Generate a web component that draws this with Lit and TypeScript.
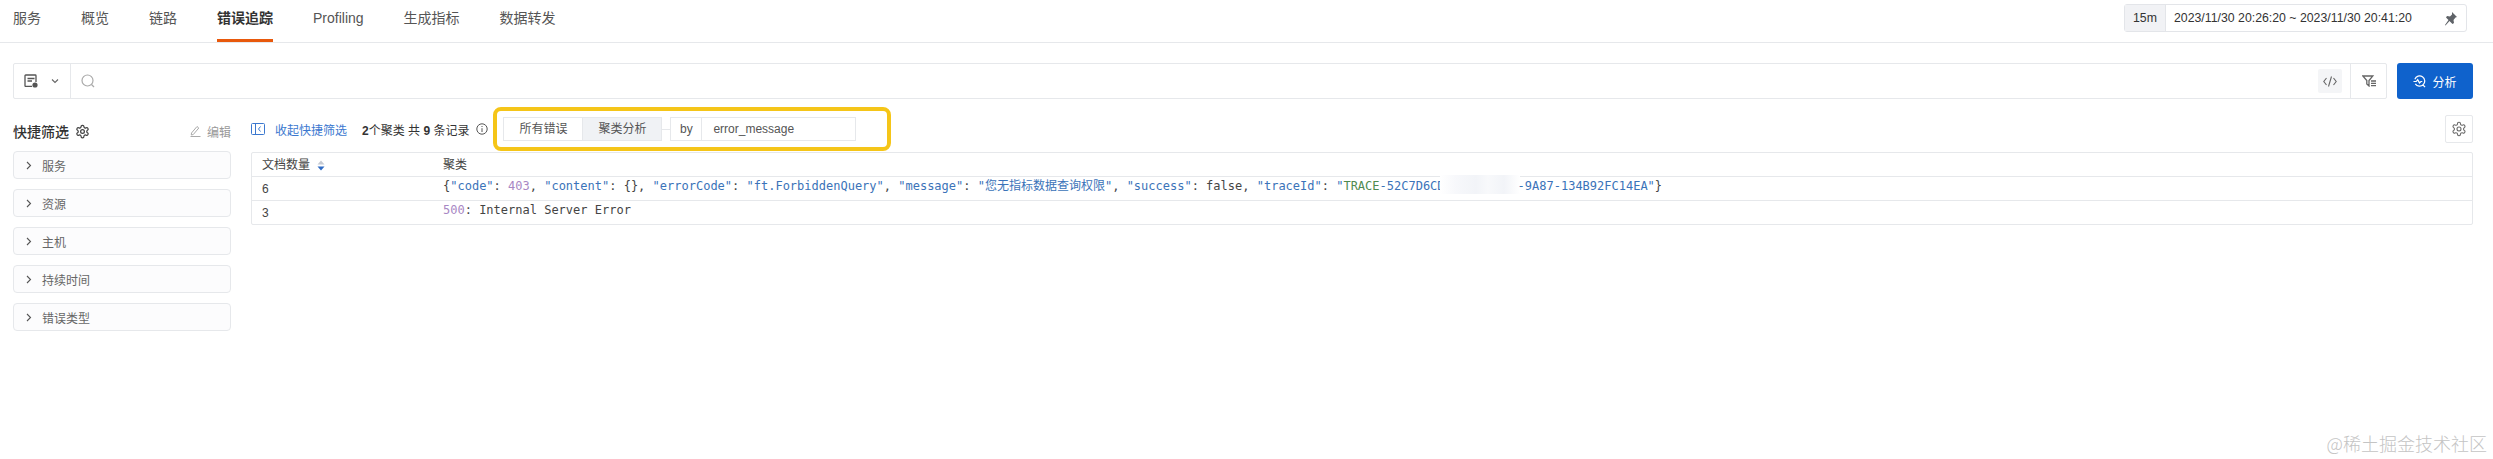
import { LitElement, html, css, svg } from 'lit';
import { customElement } from 'lit/decorators.js';

const GEAR = svg`<path d="M12.22 2h-.44a2 2 0 0 0-2 2v.18a2 2 0 0 1-1 1.73l-.43.25a2 2 0 0 1-2 0l-.15-.08a2 2 0 0 0-2.73.73l-.22.38a2 2 0 0 0 .73 2.73l.15.1a2 2 0 0 1 1 1.72v.51a2 2 0 0 1-1 1.74l-.15.09a2 2 0 0 0-.73 2.73l.22.38a2 2 0 0 0 2.73.73l.15-.08a2 2 0 0 1 2 0l.43.25a2 2 0 0 1 1 1.73V20a2 2 0 0 0 2 2h.44a2 2 0 0 0 2-2v-.18a2 2 0 0 1 1-1.73l.43-.25a2 2 0 0 1 2 0l.15.08a2 2 0 0 0 2.73-.73l.22-.39a2 2 0 0 0-.73-2.73l-.15-.08a2 2 0 0 1-1-1.74v-.5a2 2 0 0 1 1-1.74l.15-.09a2 2 0 0 0 .73-2.73l-.22-.38a2 2 0 0 0-2.73-.73l-.15.08a2 2 0 0 1-2 0l-.43-.25a2 2 0 0 1-1-1.73V4a2 2 0 0 0-2-2z"/><circle cx="12" cy="12" r="3"/>`;

const TABS = ['服务', '概览', '链路', '错误追踪', 'Profiling', '生成指标', '数据转发'];
const FILTERS = ['服务', '资源', '主机', '持续时间', '错误类型'];

@customElement('app-root')
export class AppRoot extends LitElement {
  static styles = css`
    :host {
      display: block;
      position: relative;
      height: 459px;
      overflow: hidden;
      background: #fff;
      color: #333;
      font-family: "Liberation Sans", "Noto Sans CJK SC", sans-serif;
      font-size: 12px;
    }
    svg { display: block; flex: none; }

    .top {
      display: flex;
      justify-content: space-between;
      align-items: flex-start;
      height: 42px;
      padding: 0 26px 0 13px;
      border-bottom: 1px solid #e6e8eb;
    }
    .tabs { display: flex; gap: 40px; }
    .tab {
      height: 39px;
      line-height: 36px;
      font-size: 14px;
      color: #555;
    }
    .tab.on {
      font-weight: 700;
      color: #333;
      border-bottom: 3px solid #e8590c;
    }
    .time {
      display: flex;
      align-items: center;
      width: 343px;
      height: 28px;
      margin-top: 4px;
      box-sizing: border-box;
      border: 1px solid #e3e5e9;
      border-radius: 3px;
      font-size: 12.3px;
    }
    .range {
      width: 40px;
      height: 100%;
      line-height: 26px;
      text-align: center;
      background: #f1f2f5;
      border-right: 1px solid #e3e5e9;
    }
    .dates { flex: 1; padding-left: 8px; }
    .pin { margin-right: 8px; }

    .search-row {
      display: flex;
      gap: 10px;
      padding: 20px 20px 0 13px;
    }
    .search {
      flex: 1;
      display: flex;
      align-items: center;
      height: 36px;
      box-sizing: border-box;
      border: 1px solid #e6e8eb;
      border-radius: 2px;
    }
    .source {
      display: flex;
      align-items: center;
      gap: 13px;
      width: 57px;
      height: 100%;
      box-sizing: border-box;
      padding-left: 10px;
      border-right: 1px solid #e6e8eb;
    }
    .lens { margin-left: 10px; }
    .grow { flex: 1; }
    .code-btn {
      display: flex;
      align-items: center;
      justify-content: center;
      width: 24px;
      height: 24px;
      margin-right: 8px;
      background: #f4f5f7;
      border-radius: 2px;
    }
    .filter-btn {
      display: flex;
      align-items: center;
      justify-content: center;
      width: 35px;
      height: 100%;
      border-left: 1px solid #e6e8eb;
    }
    .analyze {
      display: flex;
      align-items: center;
      justify-content: center;
      gap: 6px;
      width: 76px;
      height: 36px;
      background: #0f62cc;
      border-radius: 3px;
      color: #fff;
    }

    .main {
      display: grid;
      grid-template-columns: 218px 1fr;
      gap: 20px;
      padding: 8px 20px 0 13px;
    }
    .side-head {
      display: flex;
      align-items: center;
      gap: 6px;
      height: 44px;
      padding-top: 4px;
      box-sizing: border-box;
      font-size: 14px;
      font-weight: 500;
    }
    .edit {
      display: flex;
      align-items: center;
      gap: 6px;
      margin-left: auto;
      font-size: 12px;
      font-weight: 400;
      color: #999;
    }
    .cards { display: flex; flex-direction: column; gap: 10px; }
    .card {
      display: flex;
      align-items: center;
      gap: 10px;
      height: 28px;
      box-sizing: border-box;
      padding-left: 12px;
      border: 1px solid #e6e8eb;
      border-radius: 4px;
      background: #fcfcfd;
      color: #666;
    }

    .bar {
      display: flex;
      align-items: center;
      height: 44px;
      margin-bottom: 1px;
    }
    .collapse {
      display: flex;
      align-items: center;
      gap: 10px;
      color: #3b78cf;
    }
    .count { margin-left: 15px; }
    .info { margin-left: 7px; }
    .highlight {
      display: flex;
      align-items: center;
      width: 398px;
      height: 44px;
      margin-left: 5px;
      box-sizing: border-box;
      padding-left: 6px;
      border: 4px solid #f5c518;
      border-radius: 8px;
    }
    .seg {
      width: 80px;
      height: 24px;
      box-sizing: border-box;
      line-height: 22px;
      text-align: center;
      border: 1px solid #e6e8eb;
      color: #555;
    }
    .seg + .seg { margin-left: -1px; background: #f0f2f5; }
    .dash { width: 8px; height: 1px; background: #e6e8eb; }
    .by {
      width: 32px;
      height: 24px;
      box-sizing: border-box;
      line-height: 22px;
      text-align: center;
      border: 1px solid #e6e8eb;
      color: #555;
    }
    .field {
      width: 155px;
      height: 24px;
      margin-left: -1px;
      box-sizing: border-box;
      padding-left: 11px;
      line-height: 22px;
      border: 1px solid #e6e8eb;
      color: #555;
    }
    .settings {
      display: flex;
      align-items: center;
      justify-content: center;
      width: 28px;
      height: 28px;
      margin-left: auto;
      box-sizing: border-box;
      border: 1px solid #e6e8eb;
      border-radius: 2px;
    }

    .table {
      border: 1px solid #e6e8eb;
      border-radius: 2px;
    }
    .row {
      display: grid;
      grid-template-columns: 181px 1fr;
      height: 24px;
      box-sizing: border-box;
      padding-left: 10px;
      line-height: 24px;
    }
    .row.head { height: 23px; }
    .row + .row { border-top: 1px solid #e6e8eb; }
    .head .th { display: flex; align-items: center; gap: 7px; color: #444; }
    .num { color: #444; }
    .msg {
      font-family: "DejaVu Sans Mono", "Noto Sans CJK SC", monospace;
      font-size: 12px;
      line-height: 18px;
      white-space: nowrap;
      color: #444;
    }
    .k { color: #3b73b9; }
    .n { color: #a887c4; }
    .g { color: #4f8a4f; }
    .redact {
      display: inline-block;
      width: 80px;
      height: 19px;
      margin: -4px -2px 0 -5px;
      vertical-align: -4px;
      background: linear-gradient(90deg, #fff 0, #f7f8fb 20%, #f2f4f8 45%, #f8f9fb 60%, #f2f4f8 80%, #fff 100%);
    }

    .mark {
      position: absolute;
      right: 6px;
      bottom: 3px;
      font-family: "Noto Sans CJK SC", sans-serif;
      font-size: 18px;
      font-weight: 300;
      line-height: 26px;
      color: #c4c4c4;
    }
  `;

  render() {
    return html`
      <div class="top">
        <div class="tabs">
          ${TABS.map((t) => html`<div class="tab ${t === '错误追踪' ? 'on' : ''}">${t}</div>`)}
        </div>
        <div class="time">
          <div class="range">15m</div>
          <div class="dates">2023/11/30 20:26:20 ~ 2023/11/30 20:41:20</div>
          <svg class="pin" width="14" height="15" viewBox="0 0 14 15" fill="#5f6368">
            <path d="M8 1l5 5-1.500.5L9.500 9l.5 3-1.500 1-3-3-4 4.500-.5-.5 3.500-5L2 6.500 3 5l3 .5 2-2z"/>
          </svg>
        </div>
      </div>

      <div class="search-row">
        <div class="search">
          <div class="source">
            <svg width="14" height="14" viewBox="0 0 14 14" fill="none" stroke="#555" stroke-width="1.3">
              <path d="M8 12.400H1.700a.7.7 0 0 1-.7-.7V1.700a.7.7 0 0 1 .7-.7h9.600a.7.7 0 0 1 .7.7V8"/>
              <path d="M3.500 4.500h7M3.500 7h4.500"/>
              <circle cx="11" cy="11" r="2.600" fill="#555" stroke="none"/>
            </svg>
            <svg width="8" height="6" viewBox="0 0 8 6" fill="none" stroke="#666" stroke-width="1.1"><path d="M1 1.500l3 3 3-3"/></svg>
          </div>
          <svg class="lens" width="14" height="14" viewBox="0 0 14 14" fill="none" stroke="#aaa" stroke-width="1.2">
            <circle cx="6.500" cy="6.500" r="5.500"/><path d="M10.500 10.500l2.500 2.500"/>
          </svg>
          <div class="grow"></div>
          <div class="code-btn">
            <svg width="14" height="11" viewBox="0 0 14 11" fill="none" stroke="#666" stroke-width="1.1">
              <path d="M3.500 2L.8 5.500 3.500 9M10.500 2l2.700 3.500L10.500 9M8.500.5l-3 10"/>
            </svg>
          </div>
          <div class="filter-btn">
            <svg width="14" height="12" viewBox="0 0 14 12" fill="none" stroke="#666" stroke-width="1.3">
              <path d="M.8 1h10L7 5.500V11L4.800 9V5.500z"/>
              <path d="M9 6h5M9 8.300h5M9 10.600h5"/>
            </svg>
          </div>
        </div>
        <div class="analyze">
          <svg width="13" height="13" viewBox="0 0 14 14" fill="none" stroke="#fff" stroke-width="1.3">
            <path d="M2 4.500a5.500 5.500 0 1 1 .5 5M.5 7h3l1.500-2 2 3.500L8.500 7h1.500M10.500 10.500L13 13"/>
          </svg>
          <span>分析</span>
        </div>
      </div>

      <div class="main">
        <aside>
          <div class="side-head">
            <span>快捷筛选</span>
            <svg width="15" height="15" viewBox="0 0 24 24" fill="none" stroke="#444" stroke-width="2">${GEAR}</svg>
            <div class="edit">
              <svg width="11" height="12" viewBox="0 0 11 12" fill="none" stroke="#aaa" stroke-width="1">
                <path d="M1.500 8l5.500-6.500 1.800 1.500-5.500 6.500-2 .5zM.5 11.500h10"/>
              </svg>
              <span>编辑</span>
            </div>
          </div>
          <div class="cards">
            ${FILTERS.map((f) => html`
              <div class="card">
                <svg width="6" height="9" viewBox="0 0 6 9" fill="none" stroke="#555" stroke-width="1.1"><path d="M1 1l3.500 3.500L1 8"/></svg>
                <span>${f}</span>
              </div>`)}
          </div>
        </aside>

        <section>
          <div class="bar">
            <div class="collapse">
              <svg width="14" height="12" viewBox="0 0 14 12" fill="none" stroke="#3b78cf" stroke-width="1">
                <rect x=".5" y=".5" width="13" height="11" rx="1"/><path d="M4.500 .5v11M9.500 3.500L7.500 6l2 2.500"/>
              </svg>
              <span>收起快捷筛选</span>
            </div>
            <div class="count"><b>2</b>个聚类 共 <b>9</b> 条记录</div>
            <svg class="info" width="12" height="12" viewBox="0 0 12 12" fill="none" stroke="#555" stroke-width="1">
              <circle cx="6" cy="6" r="5.200"/><path d="M6 3v1M6 5.200V9"/>
            </svg>
            <div class="highlight">
              <div class="seg">所有错误</div>
              <div class="seg">聚类分析</div>
              <div class="dash"></div>
              <div class="by">by</div>
              <div class="field">error_message</div>
            </div>
            <div class="settings">
              <svg width="16" height="16" viewBox="0 0 24 24" fill="none" stroke="#666" stroke-width="1.6">${GEAR}</svg>
            </div>
          </div>

          <div class="table">
            <div class="row head">
              <div class="th">
                <span>文档数量</span>
                <svg width="8" height="11" viewBox="0 0 8 11"><path d="M4 .5L7.500 4.500H.5z" fill="#c5cad3"/><path d="M4 10.500L.5 6.500h7z" fill="#2f6bc4"/></svg>
              </div>
              <div class="th">聚类</div>
            </div>
            <div class="row">
              <div class="num">6</div>
              <div class="msg">{<span class="k">"code"</span>: <span class="n">403</span>, <span class="k">"content"</span>: {}, <span class="k">"errorCode"</span>: <span class="k">"ft.ForbiddenQuery"</span>, <span class="k">"message"</span>: <span class="k">"您无指标数据查询权限"</span>, <span class="k">"success"</span>: false, <span class="k">"traceId"</span>: <span class="k">"</span><span class="g">TRACE</span><span class="k">-52C7D6CD</span><span class="redact"></span><span class="k">-9A87-134B92FC14EA"</span>}</div>
            </div>
            <div class="row">
              <div class="num">3</div>
              <div class="msg"><span class="n">500</span>: Internal Server Error</div>
            </div>
          </div>
        </section>
      </div>

      <div class="mark">@稀土掘金技术社区</div>
    `;
  }
}
